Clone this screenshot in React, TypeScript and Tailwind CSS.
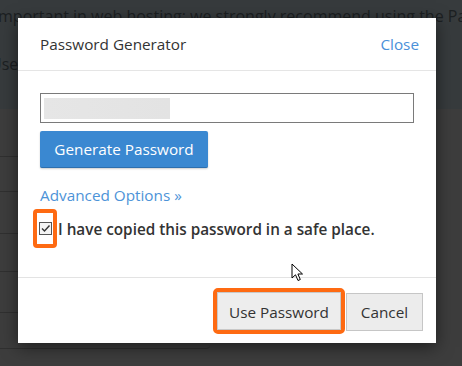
import React from 'react';

const font = { fontFamily: '"Open Sans", "Liberation Sans", sans-serif' };

// 背景ページの行（オーバーレイで暗くなっている）
const BgRow = ({ h }: { h: string }) => <div className={`${h} border-b border-[#303030]`} />;

const Cursor = () => (
  <svg width="14" height="20" viewBox="0 0 14 20" className="absolute left-[291px] top-[263px]">
    <path d="M1 1 L1 15 L4.5 11.8 L7 17.5 L9.3 16.5 L6.9 11 L11.5 11 Z" fill="#fff" stroke="#000" strokeWidth="1" strokeLinejoin="round" />
  </svg>
);

const App = () => {
  return (
    <div className="relative w-[462px] h-[366px] overflow-hidden bg-[#3d3d3d]" style={font}>
      {/* 背景ページ */}
      <div className="h-[109px] bg-[#373b3d] text-[#1c2022] text-[16px] leading-[22px] whitespace-nowrap pt-[5px]">
        <div className="-ml-[6px]">important in web hosting; we strongly recommend using the Password Generator</div>
        <div className="-ml-[10px] mt-[26px]">Uses</div>
      </div>
      <div className="w-[210px]">
        <BgRow h="h-[48px]" />
        <BgRow h="h-[35px]" />
        <BgRow h="h-[42px]" />
        <BgRow h="h-[38px]" />
        <BgRow h="h-[41px]" />
        <div className="h-[36px] border-b border-[#303030] rounded-br-[4px]" />
      </div>

      {/* モーダル */}
      <div className="absolute left-[18px] top-[18px] w-[418px] h-[325px] bg-white shadow-[0_4px_16px_rgba(0,0,0,0.5)] flex flex-col">
        <div className="h-[53px] flex items-center justify-between pl-[22px] pr-[17px] border-b border-[#e5e5e5]">
          <span className="text-[15.3px] text-[#333]">Password Generator</span>
          <span className="text-[15.3px] text-[#4a90d9]">Close</span>
        </div>

        <div className="flex-1 px-[22px] pt-[22px] border-b border-[#e3e3e3]">
          <div className="h-[30px] w-[374px] border border-[#7a7a7a] px-[3px] py-[4px]">
            <div className="h-[21px] w-[126px] bg-gradient-to-r from-[#e6e6e6] to-[#e3e3e3]" />
          </div>
          <button className="mt-[8px] h-[37px] w-[168px] rounded-[2px] bg-[#3a88d1] border-b border-[#2d6fae] text-white text-[15.3px] shadow-[0_1px_2px_rgba(0,0,0,0.2)]">
            Generate Password
          </button>
          <div className="mt-[17px] text-[15.3px] leading-[20px] text-[#4d93d8]">Advanced Options »</div>
          <div className="flex items-center mt-[4px]">
            <div className="-ml-[7px] w-[24px] h-[39px] border-[4px] border-[#fe6a12] rounded-[4px] flex items-center justify-center">
              <div className="w-[13px] h-[13px] border border-[#555] bg-[#f4f4f4] flex items-center justify-center">
                <svg width="11" height="11" viewBox="0 0 11 11">
                  <path d="M2 5.5 L4.5 8 L9.5 2.5" fill="none" stroke="#333" strokeWidth="1.4" />
                </svg>
              </div>
            </div>
            <span className="text-[15.3px] font-semibold text-[#333] ml-[1px] pt-[2px]">I have copied this password in a safe place.</span>
          </div>
        </div>

        <div className="h-[65px] flex items-center justify-end pr-[13px] gap-[1px]">
          <div className="h-[46px] w-[132px] border-[4px] border-[#fe6a12] rounded-[5px] flex mt-[1px]">
            <button className="flex-1 bg-[#ededed] border border-[#c8c8c8] text-[15.3px] text-[#333] pt-[2px]">Use Password</button>
          </div>
          <button className="h-[38px] w-[77px] bg-[#ececec] border border-[#c6c6c6] text-[15.3px] text-[#333] mt-[2px] pt-[1px]">Cancel</button>
        </div>
      </div>

      <Cursor />
    </div>
  );
};

export default App;
